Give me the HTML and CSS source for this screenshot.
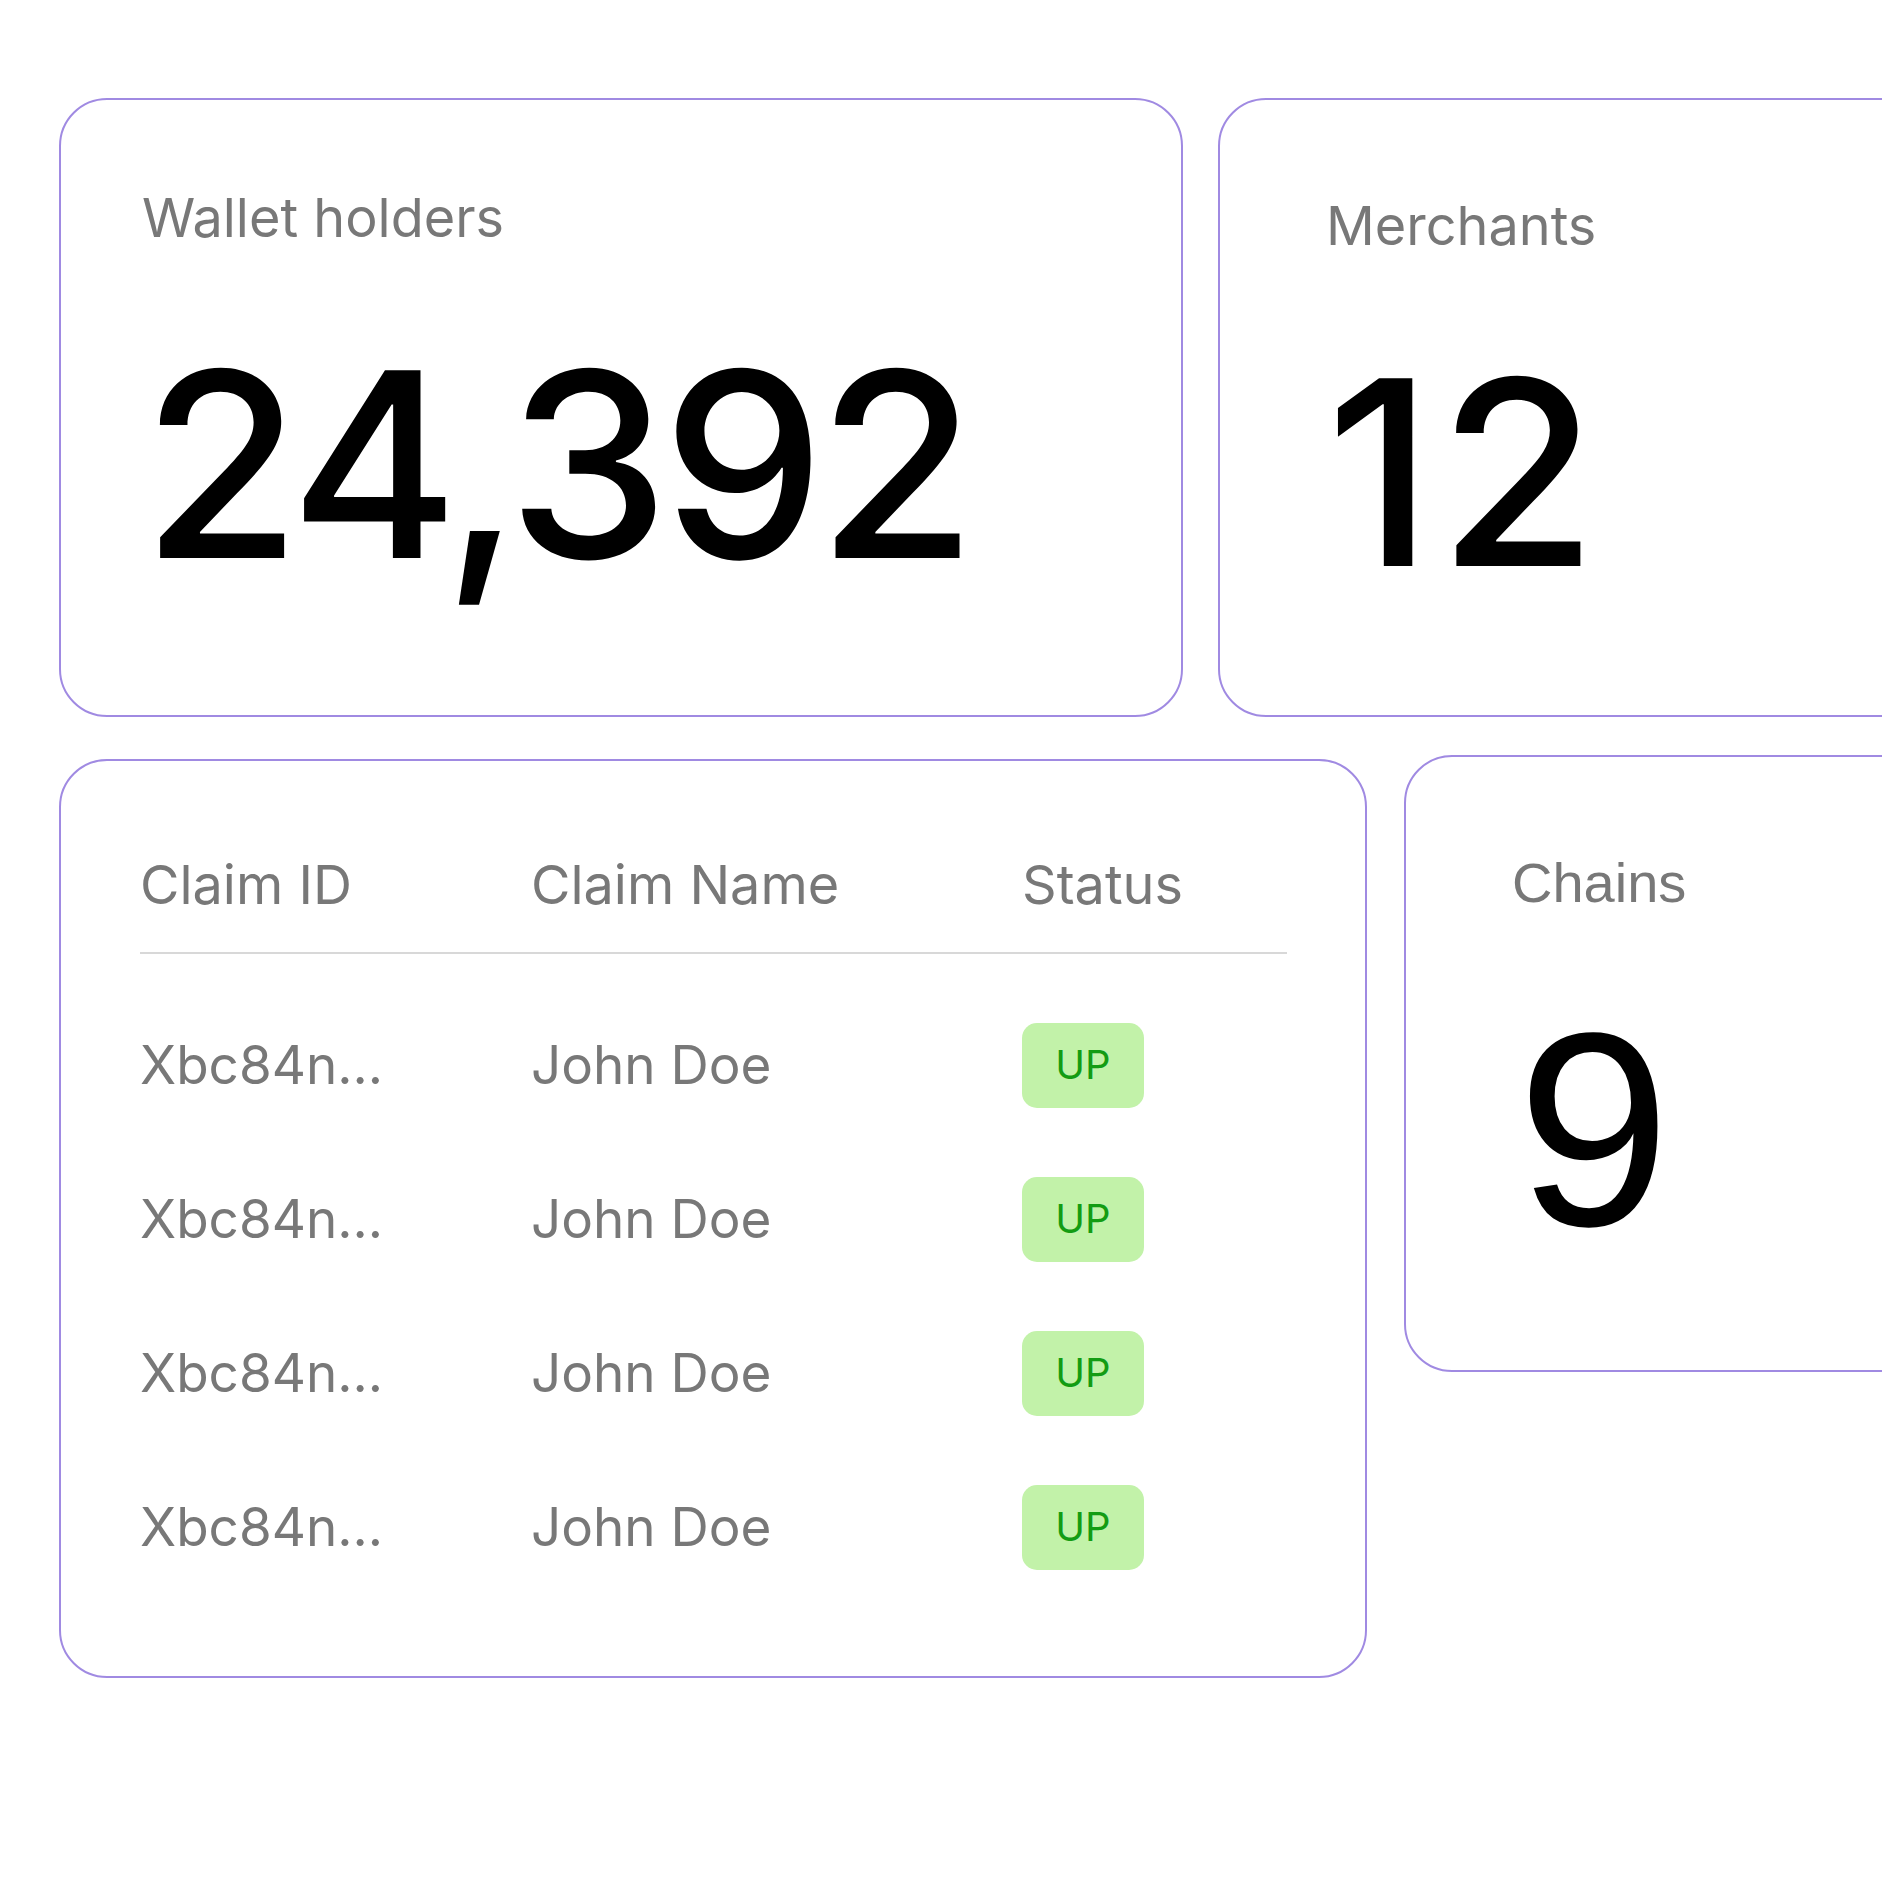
FILE: index.html
```html
<!DOCTYPE html>
<html lang="en">
<head>
    <meta charset="UTF-8">
    <meta name="viewport" content="width=device-width, initial-scale=1.0">
    <title>Dashboard</title>
    <link rel="stylesheet" href="styles.css">
</head>
<body>
    <div class="row row-top">
        <div class="card stat-card wallet-card">
            <div class="stat-label">Wallet holders</div>
            <div class="stat-value">24,392</div>
        </div>
        <div class="card stat-card merchants-card">
            <div class="stat-label">Merchants</div>
            <div class="stat-value">12</div>
        </div>
    </div>

    <div class="row row-bottom">
        <div class="card claims-card">
            <div class="claims-head">
                <span>Claim ID</span>
                <span>Claim Name</span>
                <span>Status</span>
            </div>
            <div class="claims-body">
                <div class="claim-row">
                    <span>Xbc84n...</span>
                    <span>John Doe</span>
                    <span><span class="status-badge">UP</span></span>
                </div>
                <div class="claim-row">
                    <span>Xbc84n...</span>
                    <span>John Doe</span>
                    <span><span class="status-badge">UP</span></span>
                </div>
                <div class="claim-row">
                    <span>Xbc84n...</span>
                    <span>John Doe</span>
                    <span><span class="status-badge">UP</span></span>
                </div>
                <div class="claim-row">
                    <span>Xbc84n...</span>
                    <span>John Doe</span>
                    <span><span class="status-badge">UP</span></span>
                </div>
            </div>
        </div>

        <div class="card stat-card chains-card">
            <div class="stat-label">Chains</div>
            <div class="stat-value">9</div>
        </div>
    </div>
</body>
</html>
```

FILE: styles.css
```css
html, body {
    overflow: hidden;
}
body {
    font-family: Inter, "Noto Sans", sans-serif;
    margin: 0;
    padding: 98px 0 0 59px;
    background-color: #ffffff;
    color: #787878;
}
.row {
    display: flex;
    align-items: flex-start;
}
.row-top {
    gap: 35px;
    margin-bottom: 38px;
}
.row-bottom {
    gap: 37px;
}
.card {
    flex: none;
    box-sizing: border-box;
    background: white;
    border: 2px solid #a08ae2;
    border-radius: 48px;
}
.stat-card {
    width: 1124px;
    height: 619px;
}
.stat-label {
    font-size: 54px;
    line-height: 1;
    color: #787878;
}
.stat-value {
    font-size: 258px;
    font-weight: 500;
    letter-spacing: -0.028em;
    line-height: 1;
    color: #000;
    margin-top: 90px;
}
.wallet-card {
    padding: 91px 0 0 81px;
}
.merchants-card {
    padding: 99px 0 0 106px;
}
.merchants-card .stat-value {
    letter-spacing: 0.02em;
}
.chains-card {
    height: 617px;
    padding: 98px 0 0 106px;
    font-family: "Liberation Sans", Arial, sans-serif;
}
.chains-card .stat-label {
    font-size: 56px;
}
.chains-card .stat-value {
    font-size: 276px;
    font-weight: 400;
    letter-spacing: 0;
    margin-top: 80px;
    margin-left: 5px;
}
.claims-card {
    width: 1308px;
    height: 919px;
    margin-top: 4px;
    padding: 97px 78px 0 79px;
}
.claims-head,
.claim-row {
    display: grid;
    grid-template-columns: 391px 491px 1fr;
    align-items: center;
    line-height: 1;
}
.claims-head {
    font-size: 54px;
    padding-bottom: 40px;
    border-bottom: 2px solid #d8d8d8;
}
.claims-body {
    padding-top: 34px;
}
.claim-row {
    font-size: 53px;
    height: 154px;
}
.status-badge {
    display: inline-flex;
    align-items: center;
    justify-content: center;
    width: 122px;
    height: 85px;
    border-radius: 15px;
    background: #c2f2a9;
    color: #139c13;
    font-size: 40px;
    vertical-align: middle;
}
```
